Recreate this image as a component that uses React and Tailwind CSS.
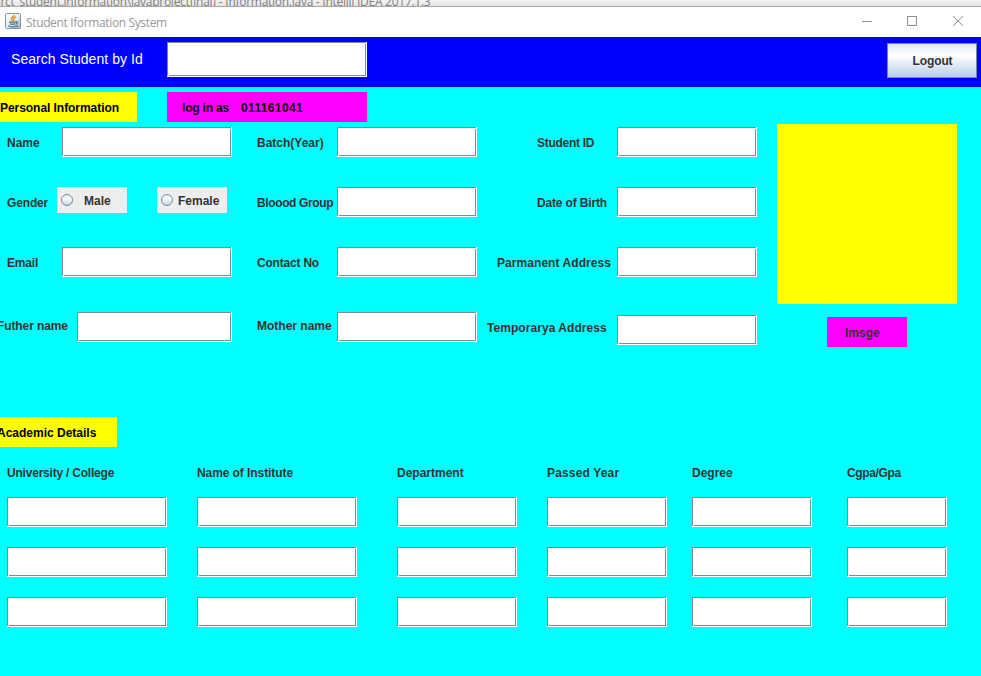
const TITLE_FONT = "font-['Open_Sans','Noto_Sans',sans-serif]";

/* Swing etched text field: grey line inside a white highlight */
function Field({ size }) {
  return (
    <div className={`shrink-0 bg-white pr-px pb-px ${size}`}>
      <div className="h-full border-t border-l border-[#7a8a99] pt-px pl-px">
        <input className="block h-full w-full border-r border-b border-[#7a8a99] bg-white px-1 text-xs outline-none" />
      </div>
    </div>
  );
}

function Label({ children, className = '' }) {
  return (
    <span className={`block shrink-0 whitespace-nowrap text-xs leading-4 font-bold text-[#333333] ${className}`}>
      {children}
    </span>
  );
}

function Radio({ label, gap }) {
  return (
    <label className={`flex h-[26px] w-[70px] shrink-0 items-center bg-[#eeeeee] pl-1 ${gap}`}>
      <svg width="12" height="12" viewBox="0 0 12 12">
        <defs>
          <linearGradient id="radioFill" x1="0" y1="0" x2="0" y2="1">
            <stop offset="0" stopColor="#dde8f3" />
            <stop offset="0.35" stopColor="#ffffff" />
            <stop offset="1" stopColor="#b8cfe5" />
          </linearGradient>
        </defs>
        <circle cx="6" cy="6" r="5.5" fill="url(#radioFill)" stroke="#7a8a99" />
      </svg>
      <Label className="mt-0.5">{label}</Label>
    </label>
  );
}

function JavaIcon() {
  return (
    <svg className="-mt-0.5" width="16" height="16" viewBox="0 0 16 16" fill="none">
      <defs>
        <linearGradient id="javaTile" x1="0" y1="0" x2="1" y2="1">
          <stop offset="0" stopColor="#ffffff" />
          <stop offset="0.55" stopColor="#e6ebef" />
          <stop offset="1" stopColor="#8fa9bd" />
        </linearGradient>
      </defs>
      <rect x="0.5" y="0.5" width="15" height="15" rx="1" fill="url(#javaTile)" stroke="#7f95a8" />
      <path d="M9 1.8C10 3.4 6.2 4.2 6.3 5.8C6.4 6.8 7.4 7.2 7.6 8M11 4C9.2 4.6 8 5.4 8.6 6.3C9.1 7 9 7.4 8.4 8" stroke="#f0902e" strokeWidth="1.5" />
      <path d="M4 9.2H10.6M4.8 11.2H10M10.6 8.8C13 8.3 12.8 10.4 10.6 11.2M3 12.6C5 14.2 11 14.2 12.8 12.4" stroke="#41708f" strokeWidth="1.2" />
    </svg>
  );
}

const COLUMNS = [
  { title: 'University / College', cell: 'ml-[7px] w-[160px]', tracking: 'tracking-[-0.21px]' },
  { title: 'Name of Institute', cell: 'ml-[30px] w-[160px]', tracking: 'tracking-[-0.08px]' },
  { title: 'Department', cell: 'ml-10 w-[120px]', tracking: '' },
  { title: 'Passed Year', cell: 'ml-[30px] w-[120px]', tracking: 'tracking-[0.16px]' },
  { title: 'Degree', cell: 'ml-[25px] w-[120px]', tracking: '' },
  { title: 'Cgpa/Gpa', cell: 'ml-[35px] w-[100px]', tracking: 'tracking-[-0.36px]' },
];

export default function App() {
  return (
    <div className="flex h-[676px] w-[981px] flex-col overflow-hidden bg-[#00ffff] font-['Liberation_Sans',Arial,sans-serif]">
      <div className="h-1.5 shrink-0 overflow-hidden bg-linear-to-b from-[#f3f3f3] to-[#e4e4e4]">
        <p className={`-mt-1.5 -ml-[6px] whitespace-nowrap text-xs leading-4 tracking-[-0.27px] text-[#808080] ${TITLE_FONT}`}>
          arct_student.information\javaprojectfinal] - Information.java - IntelliJ IDEA 2017.1.3
        </p>
      </div>

      <header className="flex h-[31px] shrink-0 items-center border-t border-[#a8a8a8] bg-white pl-[5px]">
        <JavaIcon />
        <h1 className={`mt-px ml-[5px] text-xs leading-4 tracking-[-0.36px] text-[#999999] ${TITLE_FONT}`}>Student Iformation System</h1>
        <svg className="ml-auto" width="120" height="30" viewBox="861 7 120 30" fill="none" stroke="#8f8f8f">
          <path d="M862 21.5H872" />
          <rect x="907.5" y="16.5" width="9" height="9" />
          <path d="M953 16L963 26M963 16L953 26" />
        </svg>
      </header>

      <div className="flex h-[50px] shrink-0 items-start bg-[#0000ff] pt-[5px]">
        <span className="mt-2 ml-[11px] w-[156px] whitespace-nowrap text-sm leading-[18px] tracking-[0.05px] text-white">Search Student by Id</span>
        <Field size="h-[35px] w-[200px]" />
        <button className="mt-px mr-1 ml-auto h-[35px] w-[90px] border border-[#7a8a99] bg-linear-to-b from-[#dde8f3] via-white via-35% to-[#b8cfe5] pl-px text-xs font-bold tracking-[-0.1px] text-[#333333]">
          Logout
        </button>
      </div>

      <div className="flex h-[35px] shrink-0 pt-[5px]">
        <div className="flex h-[30px] w-[137px] items-center bg-[#ffff00] pt-0.5">
          <Label className="tracking-[-0.05px] text-black">Personal Information</Label>
        </div>
        <div className="ml-[30px] flex h-[30px] w-[200px] items-center bg-[#ff00ff] pt-0.5 pl-[15px]">
          <Label className="w-[59px] tracking-[-0.2px] text-black">log in as</Label>
          <Label className="tracking-[0.36px] text-black">011161041</Label>
        </div>
      </div>

      <div className="flex h-[295px] shrink-0">
        <div className="w-[777px] shrink-0 pt-[5px]">
          <div className="flex h-[60px] items-start">
            <Label className="mt-2 ml-[7px] w-[55px]">Name</Label>
            <Field size="h-[30px] w-[170px]" />
            <Label className="mt-2 ml-[25px] w-[80px]">Batch(Year)</Label>
            <Field size="h-[30px] w-[140px]" />
            <Label className="mt-2 ml-[60px] w-[80px] tracking-[-0.28px]">Student ID</Label>
            <Field size="h-[30px] w-[140px]" />
          </div>
          <div className="flex h-[60px] items-start">
            <Label className="mt-2 ml-[7px] w-[50px] tracking-[-0.15px]">Gender</Label>
            <Radio label="Male" gap="gap-[11px]" />
            <div className="w-[30px] shrink-0" />
            <Radio label="Female" gap="gap-[5px]" />
            <Label className="mt-2 ml-[30px] w-[80px] tracking-[-0.38px]">Bloood Group</Label>
            <Field size="h-[30px] w-[140px]" />
            <Label className="mt-2 ml-[60px] w-[80px] tracking-[-0.16px]">Date of Birth</Label>
            <Field size="h-[30px] w-[140px]" />
          </div>
          <div className="flex h-[65px] items-start">
            <Label className="mt-2 ml-[7px] w-[55px] tracking-[-0.2px]">Email</Label>
            <Field size="h-[30px] w-[170px]" />
            <Label className="mt-2 ml-[25px] w-[80px] tracking-[-0.2px]">Contact No</Label>
            <Field size="h-[30px] w-[140px]" />
            <Label className="mt-2 ml-5 w-[120px] tracking-[0.06px]">Parmanent Address</Label>
            <Field size="h-[30px] w-[140px]" />
          </div>
          <div className="flex items-start">
            <Label className="mt-[6px] -ml-[3px] w-[80px] tracking-[-0.1px]">Futher name</Label>
            <Field size="h-[30px] w-[155px]" />
            <Label className="mt-[6px] ml-[25px] w-[80px]">Mother name</Label>
            <Field size="h-[30px] w-[140px]" />
            <Label className="mt-2 ml-[10px] w-[130px] tracking-[0.06px]">Temporarya Address</Label>
            <Field size="mt-[3px] h-[30px] w-[140px]" />
          </div>
        </div>
        <div className="flex w-[180px] shrink-0 flex-col items-center pt-0.5">
          <div className="h-[180px] w-full bg-[#ffff00]" />
          <button className="mt-[13px] flex h-[30px] w-20 items-center bg-[#ff00ff] pt-0.5 pl-[18px]">
            <Label>Imsge</Label>
          </button>
        </div>
      </div>

      <div className="flex h-[30px] w-[117px] shrink-0 items-center bg-[#ffff00] pt-0.5">
        <Label className="-ml-[3px] text-black">Academic Details</Label>
      </div>

      <div className="mt-[18px] flex">
        {COLUMNS.map((c) => (
          <div key={c.title} className={`shrink-0 ${c.cell}`}>
            <Label className={c.tracking}>{c.title}</Label>
            <div className="mt-4 flex flex-col gap-5">
              <Field size="h-[30px] w-full" />
              <Field size="h-[30px] w-full" />
              <Field size="h-[30px] w-full" />
            </div>
          </div>
        ))}
      </div>
    </div>
  );
}
